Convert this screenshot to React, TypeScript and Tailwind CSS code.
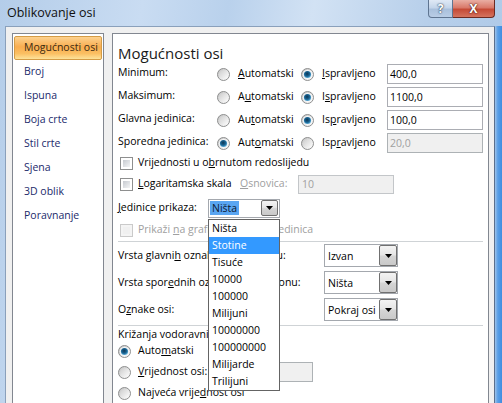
import React from "react";

function Defs() {
  return (
    <svg width="0" height="0" className="block">
      <defs>
        <linearGradient id="rb" x1="0" y1="0" x2="1" y2="1">
          <stop offset="0" stopColor="#bdbdbd" />
          <stop offset="0.6" stopColor="#ececec" />
          <stop offset="1" stopColor="#ffffff" />
        </linearGradient>
        <radialGradient id="rd" cx="0.45" cy="0.4" r="0.65">
          <stop offset="0" stopColor="#0d3654" />
          <stop offset="0.55" stopColor="#1a6594" />
          <stop offset="1" stopColor="#6ec0ea" />
        </radialGradient>
        <linearGradient id="ri" x1="0" y1="0" x2="1" y2="1">
          <stop offset="0" stopColor="#d0d0d0" />
          <stop offset="1" stopColor="#fafafa" />
        </linearGradient>
      </defs>
    </svg>
  );
}

function Radio({ checked }: { checked?: boolean }) {
  return (
    <svg width="13" height="13" viewBox="0 0 13 13" className="block shrink-0">
      <circle cx="6.5" cy="6.5" r="6" fill="url(#rb)" stroke="#8e8f8f" strokeWidth="1" />
      {checked ? (
        <>
          <circle cx="6.5" cy="6.5" r="4.6" fill="#f6f6f6" />
          <circle cx="6.5" cy="6.5" r="3.6" fill="url(#rd)" />
        </>
      ) : (
        <circle cx="6.5" cy="6.5" r="4" fill="url(#ri)" />
      )}
    </svg>
  );
}

function Check({ disabled }: { disabled?: boolean }) {
  return (
    <div
      className={
        disabled
          ? "w-[13px] h-[13px] shrink-0 border border-[#cacaca] bg-[#f4f4f4] p-[2px]"
          : "w-[13px] h-[13px] shrink-0 border border-[#8e8f8f] bg-white p-[2px]"
      }
    >
      <div
        className={
          disabled
            ? "w-full h-full bg-[#f0f0f0]"
            : "w-full h-full bg-[linear-gradient(135deg,#c6cad0,#f4f5f6)]"
        }
      />
    </div>
  );
}

function Arrow() {
  return (
    <svg width="7" height="4" viewBox="0 0 7 4" className="block">
      <path d="M0 0 H7 L3.5 4 Z" fill="#000" />
    </svg>
  );
}

function SelBtn({ w, h }: { w: string; h: string }) {
  return (
    <div
      className={`${w} ${h} flex items-center justify-center border border-[#707070] rounded-[2px] bg-[linear-gradient(to_bottom,#f3f3f3_0%,#e6e6e6_45%,#d4d4d4_55%,#c9c9c9_100%)]`}
    >
      <Arrow />
    </div>
  );
}

function BigSelect({ value }: { value: string }) {
  return (
    <div className="w-[74px] h-[23px] border border-[#a4a8ae] bg-white flex items-center">
      <span className="pl-[3px] flex-1 leading-[20px]">{value}</span>
      <div className="self-stretch flex">
        <SelBtn w="w-[18px]" h="h-full" />
      </div>
    </div>
  );
}

function Input({ value, disabled, w }: { value: string; disabled?: boolean; w: string }) {
  return (
    <div
      className={
        disabled
          ? `${w} h-[20px] border border-[#adb2b5] bg-[#f0f0f0] text-[#a0a0a0] pl-[2px] leading-[18px]`
          : `${w} h-[20px] border border-[#abadb3] bg-white pl-[2px] leading-[18px]`
      }
    >
      {value}
    </div>
  );
}

const navItems = ["Broj", "Ispuna", "Boja crte", "Stil crte", "Sjena", "3D oblik", "Poravnanje"];
const listItems = [
  "Ništa",
  "Stotine",
  "Tisuće",
  "10000",
  "100000",
  "Milijuni",
  "10000000",
  "100000000",
  "Milijarde",
  "Trilijuni",
];

function AxisRow({
  label,
  auto,
  fixed,
  value,
  autoChecked,
}: {
  label: string;
  auto: React.ReactNode;
  fixed: React.ReactNode;
  value: string;
  autoChecked?: boolean;
}) {
  return (
    <div className="h-[20px] flex items-center">
      <div className="w-[99px] leading-[20px] -mt-[4px]">{label}</div>
      <Radio checked={autoChecked} />
      <div className="ml-[8px] w-[63px]">{auto}</div>
      <Radio checked={!autoChecked} />
      <div className="ml-[8px] w-[65px]">{fixed}</div>
      <Input value={value} disabled={autoChecked} w="w-[96px]" />
    </div>
  );
}

export default function App() {
  return (
    <div className="w-[502px] h-[403px] overflow-hidden flex flex-col font-['Open_Sans',sans-serif] text-[10.5px] text-black bg-[linear-gradient(100deg,#b4cde9_0%,#c9dcf2_25%,#b9d1ec_40%,#d2e2f4_55%,#b7cfea_75%,#aac7e7_100%)]">
      <Defs />
      {/* Title bar */}
      <div className="h-[26px] shrink-0 flex items-start">
        <div className="pl-[7px] pt-[5px] text-[12.5px] leading-[16px] text-[#101010]">Oblikovanje osi</div>
        <div className="ml-auto mr-[7px] flex">
          <div className="w-[25px] h-[18px] rounded-bl-[4px] border border-t-0 border-[#5f7591] bg-[linear-gradient(to_bottom,#dfe9f5_0%,#c4d5ea_45%,#a9c0dc_55%,#b9cde6_100%)] flex items-center justify-center text-[12px] font-bold text-white leading-none [text-shadow:0_0_2px_#2a3a52,0_0_1px_#2a3a52]">
            ?
          </div>
          <div className="w-[42px] h-[18px] rounded-br-[4px] border border-t-0 border-l-0 border-[#6b2a22] bg-[linear-gradient(to_bottom,#e9aea3_0%,#d9796a_45%,#c54a36_55%,#d5735e_100%)] flex items-center justify-center text-[12px] font-bold text-white leading-none [text-shadow:0_0_2px_#4a1a12,0_0_1px_#4a1a12]">
            X
          </div>
        </div>
      </div>

      <div className="flex-1 flex">
        {/* Body */}
        <div className="flex-1 flex ml-[5px] bg-[#f0f0f0] border border-b-0 border-[#8aa0bb] border-r-[#5a6f8c] pt-[6px] pl-[6px] pr-[5px] gap-[8px]">
          {/* Nav */}
          <div className="w-[92px] shrink-0 bg-white border border-b-0 border-[#828790] pt-[2px] text-[#1b2a6b]">
            <div className="mx-[1px] h-[24px] flex items-center pl-[9px] border border-[#d59c45] rounded-[2px] bg-[linear-gradient(to_bottom,#fdd28f_0%,#f9ad50_45%,#fbbf62_75%,#fde39b_100%)] text-[#3a2a12]">
              Mogućnosti osi
            </div>
            {navItems.map((n) => (
              <div key={n} className="h-[24px] flex items-center pl-[11px]">
                {n}
              </div>
            ))}
          </div>

          {/* Panel */}
          <div className="w-[377px] shrink-0 bg-white border border-b-0 border-[#828790] pl-[5px]">
            <div className="mt-[9px] h-[20px] leading-[20px] text-[15px] text-[#1a1a1a]">Mogućnosti osi</div>
            <div className="mt-[1px] flex flex-col gap-[3px]">
              <AxisRow
                label="Minimum:"
                auto={<><u>A</u>utomatski</>}
                fixed={<><u>I</u>spravljeno</>}
                value="400,0"
              />
              <AxisRow
                label="Maksimum:"
                auto={<>A<u>u</u>tomatski</>}
                fixed={<>I<u>s</u>pravljeno</>}
                value="1100,0"
              />
              <AxisRow
                label="Glavna jedinica:"
                auto={<>Au<u>t</u>omatski</>}
                fixed={<>Is<u>p</u>ravljeno</>}
                value="100,0"
              />
              <AxisRow
                label="Sporedna jedinica:"
                auto={<>Aut<u>o</u>matski</>}
                fixed={<>Isp<u>r</u>avljeno</>}
                value="20,0"
                autoChecked
              />
            </div>

            {/* checkbox rows */}
            <div className="h-[20px] flex items-center">
              <div className="ml-[2px]"><Check /></div>
              <span className="ml-[5px]">Vrijednosti u o<u>b</u>rnutom redoslijedu</span>
            </div>
            <div className="h-[22px] flex items-center">
              <div className="ml-[2px]"><Check /></div>
              <span className="ml-[5px] w-[102px]"><u>L</u>ogaritamska skala</span>
              <span className="w-[58px] text-[#a0a0a0]"><u>O</u>snovica:</span>
              <div className="w-[96px] h-[19px] border border-[#c3c6c9] bg-[#f0f0f0] text-[#a0a0a0] pl-[3px] leading-[17px]">10</div>
            </div>
            <div className="h-[26px] flex items-center">
              <span className="w-[90px]"><u>J</u>edinice prikaza:</span>
              <div className="relative w-[72px] h-[19px] border border-[#a4a8ae] bg-white flex items-center">
                <span className="ml-[1px] px-[2px] leading-[14px] bg-[#5aa6f2] text-[#0b1730]">Ništa</span>
                <div className="ml-auto mr-[1px] flex">
                  <SelBtn w="w-[17px]" h="h-[16px]" />
                </div>
                {/* open list */}
                <div className="absolute left-[-1px] top-[19px] z-10 w-[72px] border border-[#646464] bg-white">
                  {listItems.map((it) => (
                    <div
                      key={it}
                      className={
                        it === "Stotine"
                          ? "h-[17px] leading-[17px] pl-[3px] bg-[#3399ff] text-white"
                          : "h-[17px] leading-[17px] pl-[3px] text-black"
                      }
                    >
                      {it}
                    </div>
                  ))}
                </div>
              </div>
            </div>
            <div className="h-[18px] flex items-center text-[#a0a0a0]">
              <div className="ml-[2px]"><Check disabled /></div>
              <span className="ml-[5px]">Prikaži <u>n</u>a grafikonu oznaku jedinica</span>
            </div>
            <div className="mt-[2px] h-px w-[365px] bg-[#cfd3d6]" />

            <div className="mt-[2px] flex flex-col gap-[4px]">
              <div className="h-[23px] flex items-center">
                <span className="w-[206px]">Vrsta glavni<u>h</u> oznaka na grafikonu:</span>
                <BigSelect value="Izvan" />
              </div>
              <div className="h-[23px] flex items-center">
                <span className="w-[206px]">Vrsta spor<u>e</u>dnih oznaka na grafikonu:</span>
                <BigSelect value="Ništa" />
              </div>
              <div className="h-[23px] flex items-center">
                <span className="w-[206px]">O<u>z</u>nake osi:</span>
                <BigSelect value="Pokraj osi" />
              </div>
            </div>
            <div className="mt-[4px] h-px w-[365px] bg-[#cfd3d6]" />

            <div className="h-[17px] leading-[17px]">Križanja vodoravnih osi:</div>
            <div className="h-[16px] flex items-center">
              <Radio checked />
              <span className="ml-[7px]">Auto<u>m</u>atski</span>
            </div>
            <div className="h-[26px] flex items-center">
              <Radio />
              <span className="ml-[7px] w-[79px]"><u>V</u>rijednost osi:</span>
              <div className="w-[96px] h-[20px] border border-[#adb2b5] bg-[#f0f0f0]" />
            </div>
            <div className="h-[16px] flex items-center">
              <Radio />
              <span className="ml-[7px]">Najveća vrije<u>d</u>nost osi</span>
            </div>
          </div>
        </div>
        {/* right frame edge */}
        <div className="w-[7px] shrink-0 bg-[linear-gradient(to_right,#9ec3ea_0%,#5a9fe6_40%,#3f8de0_100%)]" />
      </div>
    </div>
  );
}
